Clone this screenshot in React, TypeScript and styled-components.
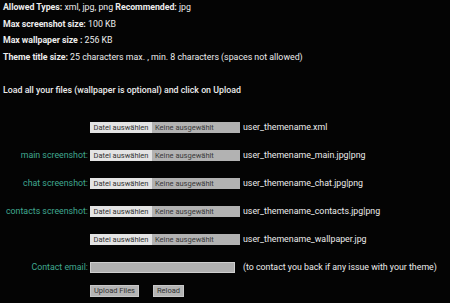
import React from 'react'
import styled, { createGlobalStyle } from 'styled-components'

const GlobalStyle = createGlobalStyle`
  html, body {
    margin: 0;
    padding: 0;
    background: #040404;
  }
  body {
    font-family: Roboto, "Liberation Sans", sans-serif;
    color: #ececec;
  }
`

const Page = styled.div`
  padding: 0 3px;
  font-size: 8.8px;
  width: 450px;
  height: 303px;
  box-sizing: border-box;
  overflow: hidden;
`

const InfoLine = styled.div`
  height: 16.7px;
  line-height: 14px;
  white-space: nowrap;
`

const Key = styled.b`
  font-weight: 700;
  letter-spacing: -0.05px;
`

const Intro = styled.div`
  margin-top: 16px;
  line-height: 14px;
  font-weight: 500;
`

const Form = styled.div`
  display: grid;
  grid-template-columns: 85px auto 1fr;
  column-gap: 2px;
  row-gap: 17px;
  margin-top: 25px;
  align-items: center;
`

const Label = styled.div`
  color: #40a890;
  text-align: right;
  white-space: nowrap;
`

const FileBox = styled.div`
  display: flex;
  width: 150px;
  height: 11px;
  font-size: 7.5px;
  line-height: 11px;
  white-space: nowrap;
`

const ChooseBtn = styled.span`
  background: #e4e4e4;
  color: #333;
  width: 62px;
  text-align: center;
`

const NoneChosen = styled.span`
  flex: 1;
  background: #b2b2b2;
  color: #3a3a3a;
  padding-left: 3px;
`

const Hint = styled.div`
  padding-left: 1px;
  white-space: nowrap;
`

const EmailInput = styled.div`
  width: 143px;
  height: 9px;
  background: #b0b0b0;
  border: 1px solid #cfcfcf;
  box-sizing: content-box;
`

const Buttons = styled.div`
  display: flex;
  gap: 14px;
  margin-top: -5px;
`

const Btn = styled.span`
  background: #b4b4b4;
  color: #333;
  font-size: 7.5px;
  line-height: 10px;
  padding: 0 3px;
  border: 1px solid #c8c8c8;
`

const files = [
  { label: '', name: 'user_themename.xml' },
  { label: 'main screenshot:', name: 'user_themename_main.jpg|png' },
  { label: 'chat screenshot:', name: 'user_themename_chat.jpg|png' },
  { label: 'contacts screenshot:', name: 'user_themename_contacts.jpg|png' },
  { label: '', name: 'user_themename_wallpaper.jpg' },
]

export default function App() {
  return (
    <>
      <GlobalStyle />
      <Page>
        <InfoLine>
          <Key>Allowed Types:</Key> xml, jpg, png <Key>Recommended:</Key> jpg
        </InfoLine>
        <InfoLine>
          <Key>Max screenshot size:</Key> 100 KB
        </InfoLine>
        <InfoLine>
          <Key>Max wallpaper size :</Key> 256 KB
        </InfoLine>
        <InfoLine>
          <Key>Theme title size:</Key> 25 characters max. , min. 8 characters (spaces not allowed)
        </InfoLine>
        <Intro>Load all your files (wallpaper is optional) and click on Upload</Intro>
        <Form>
          {files.map((f) => (
            <React.Fragment key={f.name}>
              <Label>{f.label}</Label>
              <FileBox>
                <ChooseBtn>Datei auswählen</ChooseBtn>
                <NoneChosen>Keine ausgewählt</NoneChosen>
              </FileBox>
              <Hint>{f.name}</Hint>
            </React.Fragment>
          ))}
          <Label>Contact email:</Label>
          <EmailInput />
          <Hint>(to contact you back if any issue with your theme)</Hint>
          <span />
          <Buttons>
            <Btn>Upload Files</Btn>
            <Btn>Reload</Btn>
          </Buttons>
          <span />
        </Form>
      </Page>
    </>
  )
}
